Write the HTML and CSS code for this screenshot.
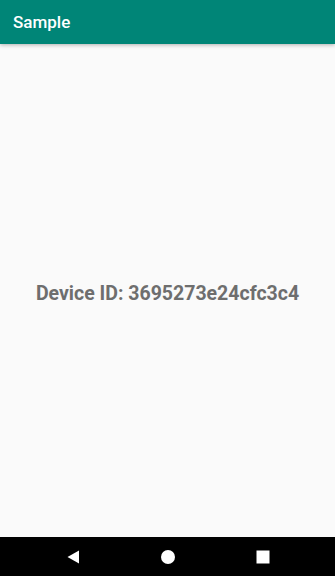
FILE: index.html
```html
<!DOCTYPE html>
<html>

<head>
    <meta charset="UTF-8">
    <title>Sample</title>
    <link rel="stylesheet" href="styles.css">
</head>

<body>
    <div class="screen">
        <div class="app-bar">Sample</div>
        <div class="content">
            <span class="device-id">Device ID: 3695273e24cfc3c4</span>
        </div>
        <div class="nav-bar">
            <svg class="nav-btn" width="14" height="14" viewBox="0 0 14 14">
                <polygon points="13,0.5 13,13.5 1.5,7" fill="#fff" />
            </svg>
            <svg class="nav-btn" width="14" height="14" viewBox="0 0 14 14">
                <circle cx="7" cy="7" r="7" fill="#fff" />
            </svg>
            <svg class="nav-btn" width="14" height="14" viewBox="0 0 14 14">
                <rect x="0.5" y="0.5" width="13" height="13" fill="#fff" />
            </svg>
        </div>
    </div>
</body>

</html>
```

FILE: styles.css
```css
body {
    margin: 0;
    padding: 0;
    font-family: Roboto, "Liberation Sans", sans-serif;
}

.screen {
    width: 335px;
    height: 576px;
    display: flex;
    flex-direction: column;
    background-color: #fafafa;
}

.app-bar {
    height: 44px;
    line-height: 44px;
    padding-left: 13px;
    background-color: #008577;
    color: #fff;
    font-size: 17px;
    font-weight: 500;
    box-shadow: 0 1px 4px rgba(0, 0, 0, 0.3);
    position: relative;
    z-index: 1;
}

.content {
    flex: 1;
    display: flex;
    align-items: center;
    justify-content: center;
}

.device-id {
    color: #6e6e6e;
    font-size: 19.5px;
    font-weight: bold;
    margin-top: 6px;
}

.nav-bar {
    height: 39px;
    background-color: #000;
    display: flex;
    align-items: center;
    justify-content: center;
    gap: 81px;
    padding-left: 1px;
}
```
